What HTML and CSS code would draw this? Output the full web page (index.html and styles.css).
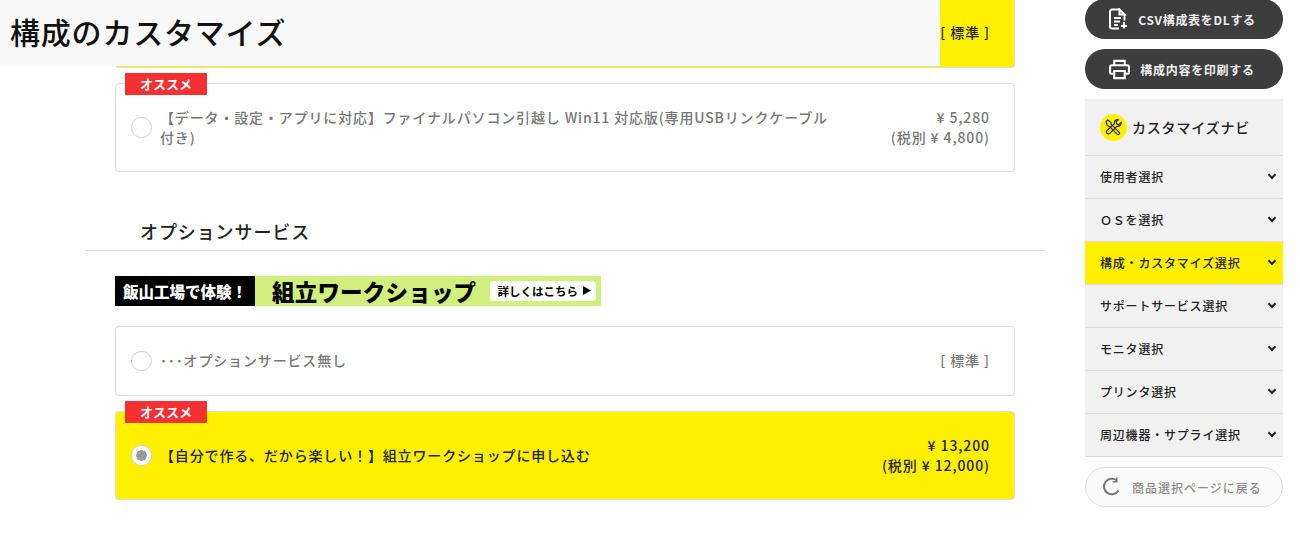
FILE: index.html
```html
<!doctype html>
<html lang="ja">
  <head>
    <meta charset="UTF-8" />
    <title>構成のカスタマイズ</title>
    <link rel="stylesheet" href="styles.css">
  </head>
  <body>
    <header class="page-title">
      <h1>構成のカスタマイズ</h1>
    </header>

    <div class="page">
      <main class="main">
        <div class="choices choices-top">
          <div class="choice choice-cut is-selected">
            <span class="choice-price">[ 標準 ]</span>
          </div>
          <label class="choice">
            <span class="badge">オススメ</span>
            <span class="radio"></span>
            <span class="choice-name">【データ・設定・アプリに対応】ファイナルパソコン引越し Win11 対応版(専用USBリンクケーブル付き)</span>
            <span class="choice-price">¥ 5,280<br>(税別 ¥ 4,800)</span>
          </label>
        </div>

        <h2 class="section-title">オプションサービス</h2>

        <div class="choices">
          <a class="banner" href="#">
            <span class="banner-lead">飯山工場で体験！</span>
            <span class="banner-body">
              <span class="banner-name">組立ワークショップ</span>
              <span class="banner-link">詳しくはこちら
                <svg width="8" height="9" viewBox="0 0 8 9"><path d="M0 0l8 4.5L0 9z" fill="#000"/></svg>
              </span>
            </span>
          </a>
          <label class="choice">
            <span class="radio"></span>
            <span class="choice-name">･･･オプションサービス無し</span>
            <span class="choice-price">[ 標準 ]</span>
          </label>
          <label class="choice is-selected">
            <span class="badge">オススメ</span>
            <span class="radio"></span>
            <span class="choice-name">【自分で作る、だから楽しい！】組立ワークショップに申し込む</span>
            <span class="choice-price">¥ 13,200<br>(税別 ¥ 12,000)</span>
          </label>
        </div>
      </main>

      <aside class="side">
        <a class="pill pill-dark pill-cut" href="#">
          <svg width="20" height="22" viewBox="0 0 20 22" fill="none" stroke="#fff" stroke-width="2">
            <path d="M11.500 1.500H4a2 2 0 0 0-2 2v15a2 2 0 0 0 2 2h7"/>
            <path d="M11.500 1.500v5h5zM16.500 6.500v6"/>
            <path d="M6 10h7M6 13.500h6M6 17h4"/>
            <path d="M16 14v6.500M13 18h6" stroke-width="1.800"/>
          </svg>
          <span>CSV構成表をDLする</span>
        </a>
        <a class="pill pill-dark" href="#">
          <svg width="21" height="21" viewBox="0 0 22 21" fill="none" stroke="#fff" stroke-width="2.200">
            <path d="M5.500 6V1.500h11V6"/>
            <path d="M5 15H2.500a1.500 1.500 0 0 1-1.400-1.500V8a2 2 0 0 1 2-2h15.800a2 2 0 0 1 2 2v5.500A1.500 1.500 0 0 1 19.500 15H17"/>
            <path d="M5.500 12h11v7.500h-11z"/>
          </svg>
          <span>構成内容を印刷する</span>
        </a>

        <nav class="nav">
          <div class="nav-head">
            <span class="nav-icon">
              <svg width="19" height="19" viewBox="0 0 18 18" fill="none" stroke="#222" stroke-width="1.100">
                <path d="M2 3.500L3.500 2l3 2 .3 2 7.700 7.700c1 1-.8 2.800-1.800 1.800L5 7.800 3.200 7.300z"/>
                <path d="M16.200 4.200l-2.300 2.100-2-.6-.5-2 2.200-2.100c-2.300-.6-4.300 1.300-3.800 3.700L3 11.600c-2.200 1.800.9 4.800 2.700 2.700l6.500-6.400c2.300.5 4.400-1.400 4-3.700z"/>
              </svg>
            </span>
            カスタマイズナビ
          </div>
          <a class="nav-item" href="#">使用者選択<span class="chevron"></span></a>
          <a class="nav-item" href="#">ＯＳを選択<span class="chevron"></span></a>
          <a class="nav-item is-current" href="#">構成・カスタマイズ選択<span class="chevron"></span></a>
          <a class="nav-item" href="#">サポートサービス選択<span class="chevron"></span></a>
          <a class="nav-item" href="#">モニタ選択<span class="chevron"></span></a>
          <a class="nav-item" href="#">プリンタ選択<span class="chevron"></span></a>
          <a class="nav-item" href="#">周辺機器・サプライ選択<span class="chevron"></span></a>
        </nav>

        <a class="pill pill-light" href="#">
          <svg width="20" height="20" viewBox="0 0 20 20" fill="none" stroke="#777" stroke-width="2">
            <path d="M16.500 13.500A7.800 7.800 0 1 1 14.500 3.300"/>
            <path d="M14.800 0.500v4.200h-4.200" stroke-width="1.600"/>
          </svg>
          <span>商品選択ページに戻る</span>
        </a>
      </aside>
    </div>
  </body>
</html>
```

FILE: styles.css
```css
:root {
  --yellow: #fff000;
  --border-color: #ddd;
  --text-color: #222;
  --muted-color: #777;
}

* {
  margin: 0;
  padding: 0;
  box-sizing: border-box;
}

body {
  font-family: 'Noto Sans CJK JP', 'Noto Sans', sans-serif;
  color: var(--text-color);
  background: #fff;
  overflow: hidden;
}

a {
  color: inherit;
  text-decoration: none;
}

.page-title {
  position: absolute;
  top: 0;
  left: 0;
  z-index: 10;
  width: 940px;
  height: 66px;
  padding: 0 0 4px 10px;
  display: flex;
  align-items: center;
  background: #f8f8f8;
}

.page-title h1 {
  font-size: 30px;
  font-weight: 500;
  letter-spacing: 0.800px;
  color: #111;
}

.page {
  display: flex;
  align-items: flex-start;
  padding-left: 85px;
}

.main {
  width: 960px;
}

.choices {
  padding: 0 30px;
  display: flex;
  flex-direction: column;
}

.choices-top {
  gap: 15px;
}

.choice {
  position: relative;
  display: flex;
  align-items: center;
  padding: 24px 24px 24px 15px;
  border: 1px solid var(--border-color);
  border-radius: 4px;
  font-size: 14px;
  line-height: 1.4;
  font-weight: 500;
  letter-spacing: 0.850px;
  color: var(--muted-color);
}

.choice.is-selected {
  background: var(--yellow);
  color: var(--text-color);
}

.choice-cut {
  height: 68px;
  padding-top: 0;
  padding-bottom: 2px;
  justify-content: flex-end;
  border-top: 0;
  border-radius: 0 0 4px 4px;
}

.badge {
  position: absolute;
  top: -11px;
  left: 9px;
  width: 82px;
  height: 22px;
  background: #f53033;
  color: #fff;
  font-size: 13px;
  line-height: 22px;
  font-weight: 700;
  letter-spacing: 0;
  text-align: center;
}

.radio {
  flex: none;
  width: 20.500px;
  height: 20.500px;
  margin-right: 8.500px;
  border: 1.500px solid #d0d0d0;
  border-radius: 50%;
  background: #fff;
}

.is-selected .radio {
  background: radial-gradient(circle, #999 0, #999 5px, #fff 5.500px);
}

.choice-name {
  flex: 1;
  max-width: 670px;
}

.choice-price {
  margin-left: auto;
  text-align: right;
  white-space: nowrap;
  letter-spacing: 0.900px;
}

.section-title {
  margin-top: 45.600px;
  padding: 0 0 6px 55px;
  border-bottom: 1px solid var(--border-color);
  font-size: 18px;
  line-height: 26px;
  font-weight: 500;
  letter-spacing: 0.900px;
}

.banner {
  display: flex;
  height: 30px;
  width: 486px;
  margin: 25px 0 20px;
  font-weight: 900;
}

.banner-lead {
  width: 140px;
  background: #000;
  color: #fff;
  font-size: 15.500px;
  line-height: 30px;
  text-align: center;
}

.banner-body {
  flex: 1;
  display: flex;
  align-items: center;
  justify-content: space-between;
  padding: 0 5px 0 17px;
  background: #d0ef7c;
  color: #000;
}

.banner-name {
  font-size: 22.500px;
  letter-spacing: 0.200px;
}

.banner-link {
  display: flex;
  align-items: center;
  gap: 5px;
  width: 106px;
  height: 20px;
  padding-left: 7.500px;
  border-radius: 4px;
  background: #fff;
  font-size: 11.500px;
  font-weight: 700;
}

.banner + .choice {
  margin-bottom: 14.800px;
}

.side {
  width: 198px;
  margin-left: 40px;
  margin-top: -1px;
}

.pill {
  display: flex;
  align-items: center;
  justify-content: center;
  gap: 10px;
  height: 40px;
  padding-right: 4px;
  border-radius: 20px;
  font-size: 12px;
  font-weight: 700;
  letter-spacing: 0.700px;
}

.pill-dark {
  margin-bottom: 10px;
  background: #3d3d3d;
  color: #eee;
}

.pill-light {
  margin-top: 10px;
  border: 1px solid var(--border-color);
  background: #fafafa;
  color: #8c8c8c;
  font-weight: 500;
  letter-spacing: 1px;
}

.nav {
  background: #f1f1f1;
  border-bottom: 1px solid var(--border-color);
}

.nav-head {
  display: flex;
  align-items: center;
  gap: 5px;
  height: 56px;
  padding-left: 15px;
  font-size: 14px;
  font-weight: 500;
  letter-spacing: 0.800px;
}

.nav-icon {
  display: flex;
  align-items: center;
  justify-content: center;
  width: 27px;
  height: 27px;
  border-radius: 50%;
  background: var(--yellow);
}

.nav-item {
  display: flex;
  align-items: center;
  justify-content: space-between;
  height: 43px;
  padding: 0 8px 2px 15px;
  border-top: 1px solid var(--border-color);
  font-size: 12px;
  font-weight: 500;
  letter-spacing: 0.800px;
}

.nav-item.is-current {
  background: var(--yellow);
}

.chevron {
  width: 6px;
  height: 6px;
  margin-top: -3px;
  border-right: 2px solid #222;
  border-bottom: 2px solid #222;
  transform: rotate(45deg);
}
```
